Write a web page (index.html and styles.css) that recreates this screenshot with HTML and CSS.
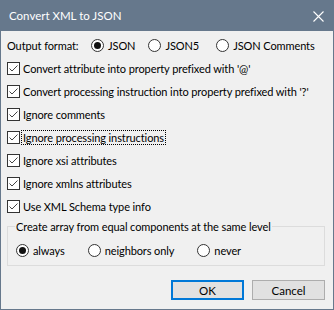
FILE: index.html
```html
<!DOCTYPE html>
<html lang="en">
<head>
    <meta charset="UTF-8">
    <title>Convert XML to JSON</title>
    <link rel="stylesheet" href="styles.css">
</head>
<body>

    <div class="window">
        <div class="titlebar">
            <span class="title">Convert XML to JSON</span>
            <svg class="close" width="11" height="11" viewBox="0 0 11 11">
                <path d="M0.5 0.5 L10.5 10.5 M10.5 0.5 L0.5 10.5" stroke="#fff" stroke-width="1.1" fill="none"/>
            </svg>
        </div>

        <div class="content">
            <div class="format-row">
                <span class="format-label">Output format:</span>
                <div class="options">
                    <span class="option"><span class="radio checked"></span>JSON</span>
                    <span class="option"><span class="radio"></span>JSON5</span>
                    <span class="option"><span class="radio"></span>JSON Comments</span>
                </div>
            </div>

            <div class="check"><span class="box on"></span><span>Convert attribute into property prefixed with '@'</span></div>
            <div class="check"><span class="box on"></span><span>Convert processing instruction into property prefixed with '?'</span></div>
            <div class="check"><span class="box on"></span><span>Ignore comments</span></div>
            <div class="check"><span class="box on"></span><span class="focus">Ignore processing instructions</span></div>
            <div class="check"><span class="box on"></span><span>Ignore xsi attributes</span></div>
            <div class="check"><span class="box on"></span><span>Ignore xmlns attributes</span></div>
            <div class="check"><span class="box on"></span><span>Use XML Schema type info</span></div>

            <div class="group">
                <span class="group-title">Create array from equal components at the same level</span>
                <div class="options group-options">
                    <span class="option"><span class="radio checked"></span>always</span>
                    <span class="option"><span class="radio"></span>neighbors only</span>
                    <span class="option"><span class="radio"></span>never</span>
                </div>
            </div>

            <div class="buttons">
                <button class="btn default">OK</button>
                <button class="btn">Cancel</button>
            </div>
        </div>
    </div>

</body>
</html>
```

FILE: styles.css
```css
body {
    margin: 0;
    font-family: Lato, sans-serif;
    font-size: 11px;
    letter-spacing: -0.1px;
    color: #000;
}

.window {
    width: 334px;
    height: 310px;
    display: flex;
    flex-direction: column;
    background-color: #f0f0f0;
    white-space: nowrap;
}

.titlebar {
    height: 31px;
    flex-shrink: 0;
    background-color: #66788c;
    color: #fff;
    display: flex;
    align-items: center;
    justify-content: space-between;
    padding: 0 10px 0 9px;
    font-size: 11.5px;
    letter-spacing: 0;
}

.close {
    display: block;
    margin-top: 1px;
}

.content {
    flex: 1;
    border: 1px solid #66788c;
    border-top: none;
    padding: 3px 8px 0 6px;
}

.format-row {
    height: 23px;
    display: flex;
    align-items: center;
}

.format-label {
    width: 84px;
}

.options {
    display: flex;
    align-items: center;
    gap: 13px;
}

.format-row .option:nth-child(2) {
    margin-right: 4px;
}

.option {
    display: flex;
    align-items: center;
    gap: 4px;
}

.radio {
    width: 13px;
    height: 13px;
    box-sizing: border-box;
    border: 1px solid #333;
    border-radius: 50%;
    background-color: #fff;
    display: flex;
    align-items: center;
    justify-content: center;
}

.radio.checked::after {
    content: "";
    width: 7px;
    height: 7px;
    border-radius: 50%;
    background-color: #111;
}

.check {
    height: 23px;
    display: flex;
    align-items: center;
    gap: 3px;
}

.box {
    width: 13px;
    height: 13px;
    box-sizing: border-box;
    border: 1px solid #333;
    background-color: #fff;
    flex-shrink: 0;
}

.box.on {
    background: #fff url("data:image/svg+xml,%3Csvg xmlns='http://www.w3.org/2000/svg' width='11' height='11'%3E%3Cpath d='M1.5 5.5 L4 8 L9.5 2.5' stroke='%23444' stroke-width='1' fill='none'/%3E%3C/svg%3E") no-repeat center;
}

.focus {
    outline: 1px dotted #000;
    padding: 0 1px;
    margin-left: -1px;
}

.group {
    margin-top: 8px;
    border: 1px solid #dcdcdc;
    height: 40px;
    box-sizing: border-box;
    padding-left: 8px;
}

.group-title {
    display: table;
    margin: -8px 0 0 -1px;
    padding: 0 1px;
    line-height: 16px;
    background-color: #f0f0f0;
}

.group-options {
    height: 23px;
    margin-top: 4px;
    gap: 23px;
}

.buttons {
    display: flex;
    justify-content: flex-end;
    gap: 8px;
    margin-top: 14px;
}

.btn {
    width: 73px;
    height: 20px;
    box-sizing: border-box;
    background-color: #e1e1e1;
    border: 1px solid #adadad;
    font-family: inherit;
    font-size: 11.5px;
    padding: 0;
    color: #000;
}

.btn.default {
    border: 2px solid #0078d7;
}
```
